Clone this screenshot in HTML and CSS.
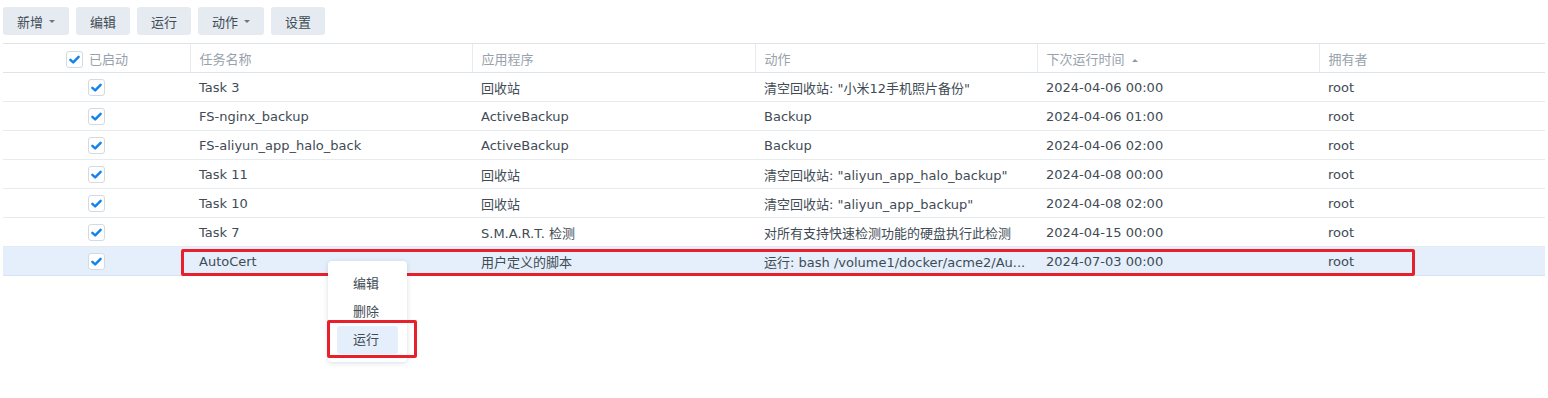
FILE: index.html
```html
<!DOCTYPE html>
<html lang="zh-CN">
<head>
  <meta charset="UTF-8">
  <title>任务计划</title>
  <link rel="stylesheet" href="styles.css">
</head>
<body>
  <div class="page">
    <div class="toolbar">
      <button class="btn">新增 <span class="caret"></span></button>
      <button class="btn">编辑</button>
      <button class="btn">运行</button>
      <button class="btn">动作 <span class="caret"></span></button>
      <button class="btn">设置</button>
    </div>

    <table class="grid">
      <colgroup>
        <col class="c-enabled">
        <col class="c-name">
        <col class="c-app">
        <col class="c-action">
        <col class="c-next">
        <col>
      </colgroup>
      <thead>
        <tr>
          <th class="enabled-head"><span class="cb"><svg viewBox="0 0 16 16"><path d="M3.6 8.3l3 2.8 5.8-6"/></svg></span>已启动</th>
          <th>任务名称</th>
          <th>应用程序</th>
          <th>动作</th>
          <th>下次运行时间 <span class="sort"></span></th>
          <th>拥有者</th>
        </tr>
      </thead>
      <tbody>
        <tr>
          <td class="enabled"><span class="cb"><svg viewBox="0 0 16 16"><path d="M3.6 8.3l3 2.8 5.8-6"/></svg></span></td>
          <td>Task 3</td>
          <td>回收站</td>
          <td>清空回收站: "小米12手机照片备份"</td>
          <td>2024-04-06 00:00</td>
          <td>root</td>
        </tr>
        <tr>
          <td class="enabled"><span class="cb"><svg viewBox="0 0 16 16"><path d="M3.6 8.3l3 2.8 5.8-6"/></svg></span></td>
          <td>FS-nginx_backup</td>
          <td>ActiveBackup</td>
          <td>Backup</td>
          <td>2024-04-06 01:00</td>
          <td>root</td>
        </tr>
        <tr>
          <td class="enabled"><span class="cb"><svg viewBox="0 0 16 16"><path d="M3.6 8.3l3 2.8 5.8-6"/></svg></span></td>
          <td>FS-aliyun_app_halo_back</td>
          <td>ActiveBackup</td>
          <td>Backup</td>
          <td>2024-04-06 02:00</td>
          <td>root</td>
        </tr>
        <tr>
          <td class="enabled"><span class="cb"><svg viewBox="0 0 16 16"><path d="M3.6 8.3l3 2.8 5.8-6"/></svg></span></td>
          <td>Task 11</td>
          <td>回收站</td>
          <td>清空回收站: "aliyun_app_halo_backup"</td>
          <td>2024-04-08 00:00</td>
          <td>root</td>
        </tr>
        <tr>
          <td class="enabled"><span class="cb"><svg viewBox="0 0 16 16"><path d="M3.6 8.3l3 2.8 5.8-6"/></svg></span></td>
          <td>Task 10</td>
          <td>回收站</td>
          <td>清空回收站: "aliyun_app_backup"</td>
          <td>2024-04-08 02:00</td>
          <td>root</td>
        </tr>
        <tr>
          <td class="enabled"><span class="cb"><svg viewBox="0 0 16 16"><path d="M3.6 8.3l3 2.8 5.8-6"/></svg></span></td>
          <td>Task 7</td>
          <td>S.M.A.R.T. 检测</td>
          <td>对所有支持快速检测功能的硬盘执行此检测</td>
          <td>2024-04-15 00:00</td>
          <td>root</td>
        </tr>
        <tr class="selected">
          <td class="enabled"><span class="cb"><svg viewBox="0 0 16 16"><path d="M3.6 8.3l3 2.8 5.8-6"/></svg></span></td>
          <td>AutoCert</td>
          <td>用户定义的脚本</td>
          <td>运行: bash /volume1/docker/acme2/Au...</td>
          <td>2024-07-03 00:00</td>
          <td>root</td>
        </tr>
      </tbody>
    </table>

    <!-- annotation over the selected row -->
    <div class="mark mark-row"></div>

    <div class="menu">
      <div class="menu-item">编辑</div>
      <div class="menu-item">删除</div>
      <div class="menu-item active">运行</div>
    </div>
    <div class="mark mark-run"></div>
  </div>
</body>
</html>
```

FILE: styles.css
```css
body {
  margin: 0;
  background-color: #fff;
  font-family: 'DejaVu Sans', 'Noto Sans CJK SC', sans-serif;
  font-size: 13px;
  color: #414b55;
}

.page {
  position: relative;
  padding: 7px 3px 0 3px;
  height: 391px;
}

.toolbar {
  display: flex;
  gap: 7px;
  margin-bottom: 8px;
}

.btn {
  height: 28px;
  padding: 0 14px;
  border: none;
  border-radius: 3px;
  background-color: #e6ebf1;
  color: #414b55;
  font-family: inherit;
  font-size: 13px;
  display: flex;
  align-items: center;
  gap: 6px;
}

.caret {
  width: 0;
  height: 0;
  border-left: 3px solid transparent;
  border-right: 3px solid transparent;
  border-top: 3px solid #6b7682;
}

.grid {
  width: 100%;
  border-collapse: collapse;
  table-layout: fixed;
}

.c-enabled { width: 187px; }
.c-name { width: 282px; }
.c-app { width: 283px; }
.c-action { width: 282px; }
.c-next { width: 282px; }

.grid th {
  height: 28px;
  padding: 0 9px;
  text-align: left;
  font-weight: normal;
  color: #98a2ac;
  border-top: 1px solid #dfe4ea;
  border-bottom: 1px solid #dfe4ea;
  border-left: 1px solid #e6ebf0;
  white-space: nowrap;
}

.grid th:first-child {
  border-left: none;
}

.enabled-head {
  padding-left: 63px !important;
}

.sort {
  display: inline-block;
  width: 0;
  height: 0;
  margin-left: 3px;
  vertical-align: 2px;
  border-left: 3px solid transparent;
  border-right: 3px solid transparent;
  border-bottom: 3px solid #8f99a4;
}

.grid td {
  height: 28px;
  padding: 0 9px;
  border-bottom: 1px solid #e6ebf0;
  white-space: nowrap;
  overflow: hidden;
}

.grid td.enabled {
  padding: 0 0 0 85px;
}

.grid tr.selected td {
  background-color: #e4effb;
  border-bottom-color: #d6e3f1;
}

.cb {
  display: inline-block;
  box-sizing: border-box;
  width: 17px;
  height: 17px;
  border: 1px solid #d3dae2;
  border-radius: 3px;
  background-color: #fff;
  vertical-align: -4px;
  margin-right: 6px;
}

.cb svg {
  display: block;
  width: 15px;
  height: 15px;
  fill: none;
  stroke: #1383ec;
  stroke-width: 2.6;
  stroke-linecap: round;
  stroke-linejoin: round;
}

.mark {
  position: absolute;
  box-sizing: border-box;
  border: 3px solid #e8202c;
  border-radius: 2px;
}

.mark-row {
  left: 181px;
  top: 249px;
  width: 1234px;
  height: 27px;
}

.menu {
  position: absolute;
  left: 328px;
  top: 261px;
  width: 79px;
  box-sizing: border-box;
  padding: 9px 9px 8px 9px;
  background-color: #fff;
  border-radius: 4px;
  box-shadow: 0 1px 5px rgba(40, 60, 90, 0.18);
}

.menu-item {
  height: 28px;
  line-height: 28px;
  padding-left: 16px;
  border-radius: 3px;
  color: #414b55;
}

.menu-item.active {
  background-color: #e4effb;
}

.mark-run {
  left: 327px;
  top: 320px;
  width: 90px;
  height: 38px;
}
```
